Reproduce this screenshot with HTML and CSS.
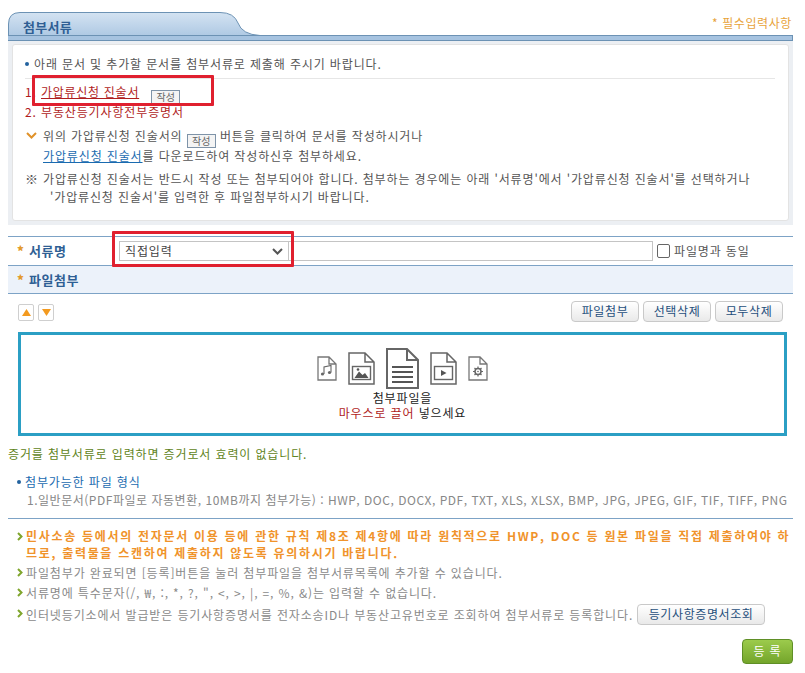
FILE: index.html
```html
<!DOCTYPE html>
<html lang="ko">
<head>
<meta charset="utf-8">
<title>첨부서류</title>
<link rel="stylesheet" href="styles.css">
</head>
<body>
<div class="page">
  <div class="head">
    <div class="tab">
      <svg class="tab-bg" width="252" height="29" viewBox="0 0 252 29"><defs><linearGradient id="tg" x1="0" y1="0" x2="0" y2="1"><stop offset="0" stop-color="#d4e3f2"/><stop offset="1" stop-color="#a6c3e0"/></linearGradient></defs><path d="M.5 29V12Q.5 .5 12 .5H212Q226 .5 230 11Q234 22.500 252 23.500V29Z" fill="url(#tg)"/><path d="M.5 29V12Q.5 .5 12 .5H212Q226 .5 230 11Q234 22.500 252 23.500" fill="none" stroke="#6c92b4"/></svg>
      <span class="tab-title">첨부서류</span>
    </div>
    <div class="head-bar"><span class="req">* 필수입력사항</span></div>
  </div>
  <div class="panel">
    <div class="panel-in">
      <p class="lead"><i class="dot"></i>아래 문서 및 추가할 문서를 첨부서류로 제출해 주시기 바랍니다.</p>
      <div class="doc-list">
        <div class="doc d1">1. <a class="red-link">가압류신청 진술서</a><span class="tag t1">작성</span></div>
        <div class="doc d2">2. 부동산등기사항전부증명서</div>
      </div>
      <div class="guide">
        <svg class="chev" width="11" height="7" viewBox="0 0 11 7"><path d="M1 1l4.500 4.500L10 1" fill="none" stroke="#e0922a" stroke-width="2"/></svg>
        <div>위의 가압류신청 진술서의 <span class="tag t2">작성</span> 버튼을 클릭하여 문서를 작성하시거나<br><a class="blue-link">가압류신청 진술서</a>를 다운로드하여 작성하신후 첨부하세요.</div>
      </div>
      <div class="note">
        <span class="mark">※</span>
        <div>가압류신청 진술서는 반드시 작성 또는 첨부되어야 합니다. 첨부하는 경우에는 아래 '서류명'에서 '가압류신청 진술서'를 선택하거나<br><span class="ind">'가압류신청 진술서'를 입력한 후 파일첨부하시기 바랍니다.</span></div>
      </div>
    </div>
  </div>

  <div class="row r-name">
    <label class="row-label"><b class="star">*</b>서류명</label>
    <div class="select"><span>직접입력</span><svg width="11" height="7" viewBox="0 0 11 7"><path d="M1 1l4.500 4.500L10 1" fill="none" stroke="#555" stroke-width="2"/></svg></div>
    <div class="text-input"></div>
    <span class="check"></span><span class="check-label">파일명과 동일</span>
  </div>
  <div class="row r-file">
    <label class="row-label"><b class="star">*</b>파일첨부</label>
  </div>

  <div class="tools">
    <div class="arrows">
      <span class="arrow"><svg width="9" height="7" viewBox="0 0 9 7"><path d="M4.500 0L9 7H0Z" fill="#f39a1f"/></svg></span>
      <span class="arrow"><svg width="9" height="7" viewBox="0 0 9 7"><path d="M4.500 7L9 0H0Z" fill="#f39a1f"/></svg></span>
    </div>
    <div class="btns">
      <span class="btn">파일첨부</span><span class="btn">선택삭제</span><span class="btn">모두삭제</span>
    </div>
  </div>

  <div class="drop">
    <div class="icons">
      <svg width="20" height="25" viewBox="0 0 20 25"><path d="M1 1H12L19 8V24H1Z M12 1V8H19" fill="none" stroke="#777" stroke-width="1.300"/><path d="M7 18V11L14 9.500V16.500" fill="none" stroke="#666" stroke-width="1.100"/><circle cx="5.500" cy="18" r="1.600" fill="#666"/><circle cx="12.500" cy="16.500" r="1.600" fill="#666"/></svg>
      <svg width="27" height="33" viewBox="0 0 27 33"><path d="M1 1H17L26 10V32H1Z M17 1V10H26" fill="none" stroke="#666" stroke-width="1.500"/><rect x="4.500" y="14.500" width="18" height="13" fill="none" stroke="#666" stroke-width="1.400"/><path d="M6.500 26L11 19.500L14.500 23L17 21L20.500 26Z" fill="#555"/><circle cx="10" cy="17.500" r="1.300" fill="#555"/></svg>
      <svg width="33" height="41" viewBox="0 0 33 41"><path d="M1 1H21L32 12V40H1Z M21 1V12H32" fill="none" stroke="#666" stroke-width="2"/><path d="M6 19H27M6 24H27M6 29H27M6 34H27" stroke="#555" stroke-width="2"/></svg>
      <svg width="27" height="33" viewBox="0 0 27 33"><path d="M1 1H17L26 10V32H1Z M17 1V10H26" fill="none" stroke="#666" stroke-width="1.500"/><rect x="4.500" y="14.500" width="18" height="13" fill="none" stroke="#666" stroke-width="1.400"/><path d="M11 18L16.500 21L11 24Z" fill="#555"/></svg>
      <svg width="20" height="25" viewBox="0 0 20 25"><path d="M1 1H12L19 8V24H1Z M12 1V8H19" fill="none" stroke="#777" stroke-width="1.300"/><path d="M10 10.500V20.500M5 15.500H15M6.500 12L13.500 19M13.500 12L6.500 19" stroke="#666" stroke-width="1.200"/><circle cx="10" cy="15.500" r="3" fill="#fff" stroke="#666" stroke-width="1.500"/><circle cx="10" cy="15.500" r=".8" fill="#666"/></svg>
    </div>
    <div class="drop-text">첨부파일을<br><em>마우스로 끌어</em> 넣으세요</div>
  </div>

  <p class="warn-green">증거를 첨부서류로 입력하면 증거로서 효력이 없습니다.</p>

  <div class="formats">
    <p class="f-title"><i class="dot"></i>첨부가능한 파일 형식</p>
    <p class="f-text">1.일반문서(PDF파일로 자동변환, 10MB까지 첨부가능) : HWP, DOC, DOCX, PDF, TXT, XLS, XLSX, BMP, JPG, JPEG, GIF, TIF, TIFF, PNG</p>
  </div>

  <ul class="notes">
    <li class="hot"><svg class="tick" width="6" height="9" viewBox="0 0 6 9"><path d="M1 1l3.500 3.500L1 8" fill="none" stroke="#7fa52c" stroke-width="2"/></svg>민사소송 등에서의 전자문서 이용 등에 관한 규칙 제8조 제4항에 따라 원칙적으로 HWP, DOC 등 원본 파일을 직접 제출하여야 하<br>므로, 출력물을 스캔하여 제출하지 않도록 유의하시기 바랍니다.</li>
    <li><svg class="tick" width="6" height="9" viewBox="0 0 6 9"><path d="M1 1l3.500 3.500L1 8" fill="none" stroke="#7fa52c" stroke-width="2"/></svg>파일첨부가 완료되면 [등록]버튼을 눌러 첨부파일을 첨부서류목록에 추가할 수 있습니다.</li>
    <li><svg class="tick" width="6" height="9" viewBox="0 0 6 9"><path d="M1 1l3.500 3.500L1 8" fill="none" stroke="#7fa52c" stroke-width="2"/></svg>서류명에 특수문자(/, ₩, :, *, ?, ", &lt;, &gt;, |, =, %, &amp;)는 입력할 수 없습니다.</li>
    <li class="with-btn"><svg class="tick" width="6" height="9" viewBox="0 0 6 9"><path d="M1 1l3.500 3.500L1 8" fill="none" stroke="#7fa52c" stroke-width="2"/></svg>인터넷등기소에서 발급받은 등기사항증명서를 전자소송ID나 부동산고유번호로 조회하여 첨부서류로 등록합니다.<span class="btn wide">등기사항증명서조회</span></li>
  </ul>

  <div class="submit-row"><span class="submit">등 록</span></div>

  <div class="hl hl-a"></div>
  <div class="hl hl-b"></div>
</div>
</body>
</html>
```
FILE: styles.css
```css
* { box-sizing: border-box; }
html, body { margin: 0; padding: 0; background: #fff; }
body { font-family: "Noto Sans CJK KR", "Liberation Sans", sans-serif; font-size: 12px; color: #555; line-height: 18px; letter-spacing: .87px; }
p { margin: 0; }
.page { position: relative; width: 805px; height: 673px; padding: 12px 12px 0 8px; overflow: hidden; }
.head { position: relative; height: 29px; display: flex; align-items: flex-end; }
.tab { position: absolute; left: 0; top: 0; width: 252px; height: 29px; }
.tab-bg { display: block; }
.tab-title { position: absolute; left: 15px; top: 6px; font-size: 13px; font-weight: 700; color: #2f5f94; letter-spacing: .3px; }
.head-bar { width: 100%; height: 6px; background: #a6c3e0; border: 1px solid #6c92b4; border-left: 0; position: relative; }
.req { position: absolute; right: 0; bottom: 8px; color: #e8a33a; letter-spacing: .6px; }
.panel { background: #eceff3; padding: 3px 4px 4px; height: 184px; }
.panel-in { background: #fff; border: 1px solid #e3e3e3; border-radius: 3px; height: 177px; padding: 10px 13px 0 12px; }
.lead { height: 24px; border-bottom: 1px solid #e6e6e6; white-space: nowrap; }
.dot { display: inline-block; width: 4px; height: 4px; border-radius: 50%; background: #23629f; margin: 0 5px 3px 0; vertical-align: middle; }
.doc-list { padding-top: 4px; }
.doc { height: 20px; color: #b01d1d; }
.red-link { color: #b01d1d; text-decoration: underline; letter-spacing: .72px; }
.tag { display: inline-block; height: 14px; line-height: 12px; width: 29px; margin-top: -4px; margin-bottom: -4px; border: 1px solid #7e93a8; background: #f4f4f4; font-size: 10px; color: #666; text-align: center; vertical-align: -4px; letter-spacing: 0; }
.t1 { margin-left: 12px; }
.guide, .note { display: flex; }
.guide { margin-top: 3px; height: 40px; line-height: 20px; }
.chev { margin: 6px 6px 0 1px; flex: none; }
.blue-link { color: #1a6bb0; text-decoration: underline; }
.note { margin-top: 4px; }
.mark { width: 18px; flex: none; font-size: 13px; letter-spacing: 0; }
.ind { padding-left: 7px; }
.row { display: flex; align-items: center; border-bottom: 1px solid #7da3c6; }
.r-name { height: 30px; margin-top: 11px; border-top: 1px solid #7da3c6; }
.r-file { height: 28px; background: #ecf2fa; }
.row-label { width: 111px; flex: none; padding-left: 9px; font-weight: 700; color: #2f5f94; font-size: 13px; display: flex; align-items: center; letter-spacing: .5px; }
.star { color: #e39a2b; width: 12px; }
.select { width: 170px; flex: none; height: 20px; border: 1px solid #c4c4c4; display: flex; align-items: center; justify-content: space-between; padding: 0 5px 1px; color: #444; }
.select svg { margin-top: 1px; }
.text-input { width: 364px; flex: none; height: 20px; border: 1px solid #c4c4c4; border-left: 0; }
.check { width: 13px; height: 14px; border: 1px solid #666; border-radius: 2px; margin-left: 4px; }
.check-label { margin-left: 4px; }
.tools { display: flex; justify-content: space-between; align-items: flex-start; height: 38px; padding: 7px 2px 0 10px; }
.arrows { display: flex; gap: 4px; padding-top: 3px; }
.arrow { width: 16px; height: 17px; border: 1px solid #cfcfcf; border-radius: 2px; display: flex; align-items: center; justify-content: center; }
.btns { display: flex; gap: 4px; padding-right: 8px; }
.btn { width: 68px; height: 21px; line-height: 18px; border: 1px solid #c9c9c9; border-radius: 4px; background: linear-gradient(#fff, #e9e9e9); color: #1f4f7c; letter-spacing: .6px; text-align: center; white-space: nowrap; }
.drop { width: 769px; height: 104px; margin-left: 10px; border: 3px solid #2b9fc4; display: flex; flex-direction: column; align-items: center; padding-top: 13px; }
.icons { display: flex; align-items: center; gap: 11px; height: 41px; }
.drop-text { color: #222; text-align: center; line-height: 15px; margin-top: 1px; }
.drop-text em { font-style: normal; color: #b01d1d; }
.warn-green { color: #5f8422; margin-top: 9px; }
.formats { padding-left: 9px; margin-top: 10px; height: 46px; border-bottom: 1px solid #7da3c6; }
.f-title { color: #1a6bb0; }
.f-title .dot { margin-right: 4px; }
.f-text { color: #888; padding-left: 10px; white-space: nowrap; letter-spacing: .52px; }
.notes { list-style: none; margin: 0; padding: 8px 0 0 9px; }
.notes li { color: #8a8a8a; position: relative; padding-left: 9px; line-height: 20px; white-space: nowrap; }
.tick { position: absolute; left: 0; top: 5px; }
.notes .hot { color: #f0932b; font-weight: 700; line-height: 17px; margin-bottom: 2px; letter-spacing: 1.7px; }
.notes .with-btn { margin-top: 1px; display: flex; align-items: center; height: 21px; }
.btn.wide { margin-left: 4px; width: 128px; }
.submit-row { display: flex; justify-content: flex-end; margin-top: 14px; }
.submit { width: 51px; height: 25px; line-height: 22px; text-align: center; color: #fff; border: 1px solid #5f8f26; border-radius: 4px; background: linear-gradient(#9ccb4c, #74a52b); }
.hl { position: absolute; border: 3px solid #e0202f; border-radius: 1px; }
.hl-a { left: 32px; top: 75px; width: 182px; height: 31px; }
.hl-b { left: 112px; top: 231px; width: 182px; height: 36px; }
```
